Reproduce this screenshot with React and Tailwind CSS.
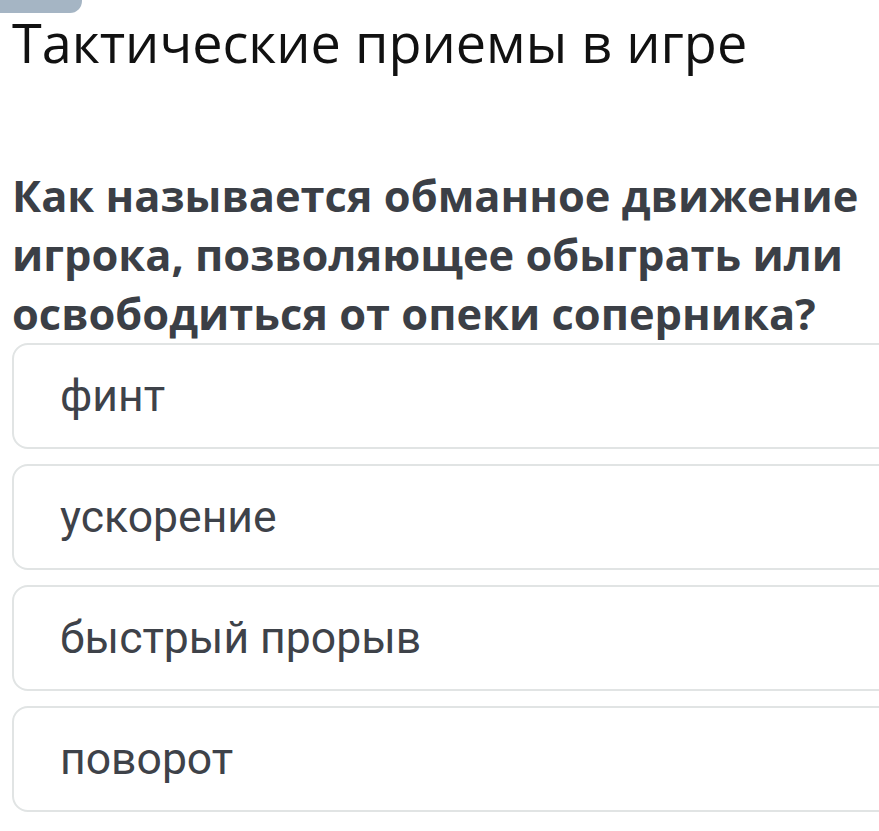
export default function App() {
  const options = ['финт', 'ускорение', 'быстрый прорыв', 'поворот'];
  return (
    <div className="w-[879px] h-[831px] bg-white overflow-hidden relative">
      <div className="absolute left-0 top-0 w-[82px] h-[13px] bg-[#a5b5c4] rounded-br-[12px]" />
      <div className="pl-[12px] pt-[10px]">
        <h1 className="text-[54px] leading-[64px] text-[#111] font-['Open_Sans',sans-serif]">
          Тактические приемы в игре
        </h1>
        <p className="mt-[92px] text-[43.4px] leading-[59px] font-bold text-[#3b3f46] font-['Open_Sans',sans-serif] w-[866px]">
          Как называется обманное движение игрока, позволяющее обыграть или освободиться от опеки соперника?
        </p>
      </div>
      <div className="flex flex-col gap-[15px] pl-[12px]">
        {options.map((o) => (
          <div
            key={o}
            className="w-[900px] h-[106px] border-2 border-[#e1e4e4] rounded-[16px] flex items-center pl-[46px]"
          >
            <span className="text-[44.5px] text-[#3e4249] font-['Roboto',sans-serif]">{o}</span>
          </div>
        ))}
      </div>
    </div>
  );
}
